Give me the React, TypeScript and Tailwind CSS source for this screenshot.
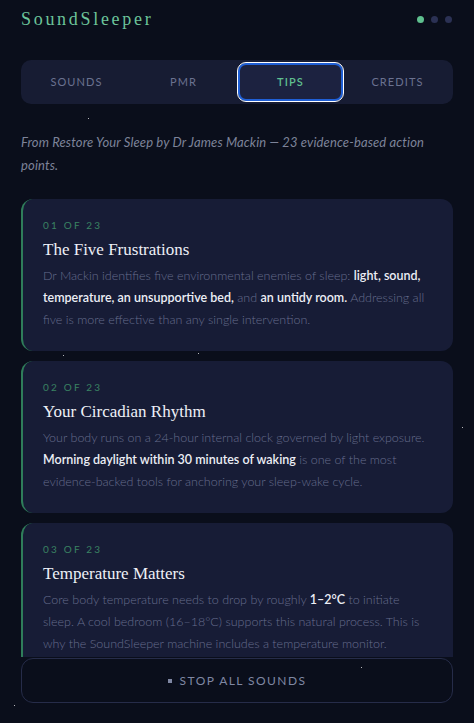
import { ReactNode } from 'react';

type Tip = {
  n: number;
  title: string;
  body: ReactNode;
};

const B = ({ children }: { children: ReactNode }) => (
  <span className="font-semibold text-[#eceef5]">{children}</span>
);

const tips: Tip[] = [
  {
    n: 1,
    title: 'The Five Frustrations',
    body: (
      <>
        Dr Mackin identifies five environmental enemies of sleep: <B>light, sound, temperature, an unsupportive bed,</B> and{' '}
        <B>an untidy room.</B> Addressing all five is more effective than any single intervention.
      </>
    ),
  },
  {
    n: 2,
    title: 'Your Circadian Rhythm',
    body: (
      <>
        Your body runs on a 24-hour internal clock governed by light exposure. <B>Morning daylight within 30 minutes of waking</B> is
        one of the most evidence-backed tools for anchoring your sleep-wake cycle.
      </>
    ),
  },
  {
    n: 3,
    title: 'Temperature Matters',
    body: (
      <>
        Core body temperature needs to drop by roughly <B>1–2°C</B> to initiate sleep. A cool bedroom (16–18°C) supports this
        natural process. This is why the SoundSleeper machine includes a temperature monitor.
      </>
    ),
  },
];

const tabs = ['SOUNDS', 'PMR', 'TIPS', 'CREDITS'];

// faint starfield behind the content
const stars = [
  [88, 118],
  [63, 355],
  [198, 353],
  [462, 427],
  [361, 667],
  [14, 705],
];

const sans = { fontFamily: 'Lato, "Open Sans", sans-serif' };
const serif = { fontFamily: '"Liberation Serif", "DejaVu Serif", serif' };

export default function App() {
  return (
    <div className="relative flex h-[723px] w-[474px] flex-col overflow-hidden bg-[#0a0e1b] px-[21px]" style={sans}>
      {stars.map(([x, y], i) => (
        <span
          key={i}
          className="absolute h-px w-px bg-white/70"
          style={{ left: x, top: y }}
        />
      ))}

      <header className="flex items-center justify-between pt-[6px]">
        <h1 className="text-[18px] tracking-[0.15em] text-[#6cc49a]" style={serif}>
          SoundSleeper
        </h1>
        <div className="flex items-center gap-[7px] pr-[1px]">
          <span className="h-[7px] w-[7px] rounded-full bg-[#5fc08f]" />
          <span className="h-[7px] w-[7px] rounded-full bg-[#2b3154]" />
          <span className="h-[7px] w-[7px] rounded-full bg-[#2b3154]" />
        </div>
      </header>

      <nav className="mt-[27px] grid h-[44px] grid-cols-4 rounded-[10px] bg-[#171c33] p-[2px]">
        {tabs.map((t) => (
          <button
            key={t}
            className={
              t === 'TIPS'
                ? 'm-[1px] rounded-[8px] border-2 border-[#1f5fd6] bg-[#1c2240] text-[11px] font-semibold tracking-[0.1em] text-[#5fbf8f] outline outline-1 outline-white'
                : 'text-[11px] tracking-[0.1em] text-[#6b7290]'
            }
          >
            {t}
          </button>
        ))}
      </nav>

      <p className="mt-[27px] text-[13px] italic leading-[23px] tracking-[0.01em] text-[#7d8399]">
        From Restore Your Sleep by Dr James Mackin — 23 evidence-based action points.
      </p>

      <div className="mt-[22px] flex min-h-0 flex-1 flex-col gap-[10px] overflow-hidden">
        {tips.map((tip) => (
          <article
            key={tip.n}
            className="shrink-0 rounded-[12px] border-l-2 border-[#2f7d5a] bg-[#171c36] pb-[20px] pl-[20px] pr-[20px] pt-[20px]"
          >
            <div className="text-[10px] leading-[12px] tracking-[0.22em] text-[#3a8262]">
              {String(tip.n).padStart(2, '0')} OF 23
            </div>
            <h2 className="mt-[7px] text-[17px] leading-[24px] text-[#eef0f6]" style={serif}>
              {tip.title}
            </h2>
            <p className="mt-[3px] text-[12.5px] font-light leading-[22px] text-[#666c8d]">{tip.body}</p>
          </article>
        ))}
      </div>

      <button className="mb-[20px] mt-px flex h-[45px] shrink-0 items-center justify-center gap-[8px] rounded-[12px] border border-[#262c49] bg-[#0a0e1b] text-[12px] tracking-[0.12em] text-[#7f87a3]">
        <span className="h-[4px] w-[4px] bg-[#7f87a3]" />
        STOP ALL SOUNDS
      </button>
    </div>
  );
}
